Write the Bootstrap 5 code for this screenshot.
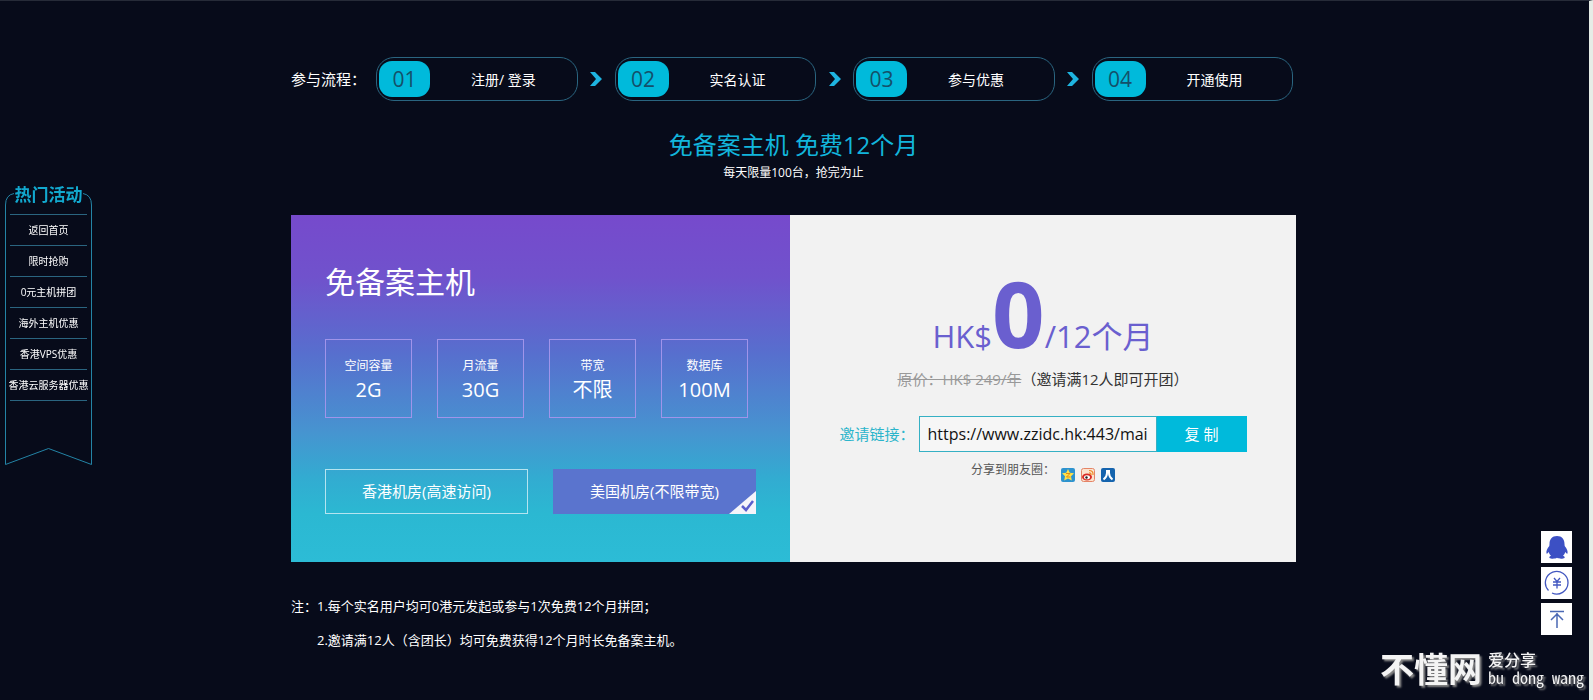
<!DOCTYPE html>
<html lang="zh-CN">
<head>
<meta charset="utf-8">
<meta name="viewport" content="width=device-width, initial-scale=1">
<title>免备案主机 免费12个月</title>
<link rel="stylesheet" href="https://cdn.jsdelivr.net/npm/bootstrap@5.3.0/dist/css/bootstrap.min.css">
<style>
  :root { --cyan: #00badb; --line: #2a6580; --violet: #6a5fcf; }
  body {
    min-height: 100vh; background: #070b1a; color: #fff; padding-right: 2px;
    border-top: 1px solid #262b38; border-right: 4px solid #e6ece6;
    font-family: "Open Sans", "Noto Sans CJK SC", sans-serif; font-size: 14px;
  }
  .page-wrap { max-width: 1005px; }
  a { color: inherit; text-decoration: none; }

  .flow { padding: 56px 3px 0 0; }
  .flow-title { flex: 0 0 85px; font-size: 15px; white-space: nowrap; }
  .flow-step { flex: 1 1 0; height: 44px; border: 1px solid var(--line); border-radius: 18px; padding-left: 2px; }
  .flow-num { width: 51px; height: 36px; border-radius: 13px; background: var(--cyan); color: #14506a; font-size: 21px; line-height: 36px; margin-right: 41px; text-align: center; }
  .flow-arrow { flex: 0 0 37px; text-align: center; line-height: 0; }

  .headline { font-size: 24px; line-height: 30px; color: #12b5dc; margin: 29px 0 0; font-weight: 400; }
  .headline-sub { font-size: 12px; line-height: 24px; margin: 1px 0 30px; }

  .offer { display: grid; grid-template-columns: 499fr 506fr; min-height: 347px; }
  .offer-spec { padding: 45px 34px 48px; background: linear-gradient(#764acc 0%, #7052cc 18%, #576fce 40%, #4793d0 62%, #32acd1 76%, #2bb8d2 86%, #2cbcd6 100%); }
  .offer-name { font-size: 30px; line-height: 44px; margin: 0 0 35px; font-weight: 400; }
  .spec-box { width: 87px; height: 79px; border: 1px solid #a094ea; padding-top: 15px; font-size: 12px; line-height: 22px; text-align: center; }
  .spec-box dt { font-weight: 400; }
  .spec-box dd { font-size: 20px; line-height: 26px; margin: 0; }
  .spec-row { gap: 25px; margin: 0 0 51px; }
  .room-row { gap: 25px; }
  .room { width: 203px; height: 45px; padding: 0; border: 1px solid #b5e4f0; background: none; color: #fff; font-size: 15px; position: relative; }
  .room.is-picked { background: #5a74ce; border-color: #5a74ce; }
  .room svg { position: absolute; right: -1px; bottom: -1px; }

  .offer-price { background: #f2f2f2; color: #333; padding-top: 52px; }
  .price { color: var(--violet); font-size: 31px; line-height: 40px; margin: 0; white-space: nowrap; }
  .price b { font-size: 92px; line-height: 92px; font-weight: 700; }
  .price-was { font-size: 15px; line-height: 24px; margin: 8px 0 25px; }
  .price-was del { color: #999; }
  .invite label { color: #2bb5cb; font-size: 15px; width: 79px; }
  .invite input { width: 238px; height: 36px; border: 1px solid #35b0c4; border-radius: 0; background: #f6f6f6; color: #111; font-size: 16px; padding: 0 8px; }
  .invite button { width: 90px; height: 36px; border: 0; background: var(--cyan); color: #fff; font-size: 15px; }
  .share { font-size: 12px; line-height: 18px; color: #555; margin-top: 9px; gap: 6px; }
  .share a { height: 21px; padding-top: 7px; line-height: 0; }

  .notes { margin: 27px 0 0; font-size: 13px; line-height: 34px; }
  .notes ol { padding: 0; margin: 0; list-style: none; }

  .side-menu { position: fixed; left: 5px; top: 186px; width: 87px; height: 280px; font-size: 10px; text-align: center; }
  .side-menu > svg { position: absolute; left: 0; top: 0; }
  .side-menu h2 { font-size: 17px; line-height: 17px; font-weight: 700; color: #12a9cf; margin: 0 0 11px; position: relative; }
  .side-menu ul { margin: 0 5px; padding: 0; list-style: none; position: relative; border-top: 1px solid var(--line); }
  .side-menu li { height: 31px; border-bottom: 1px solid var(--line); }
  .side-menu a { display: flex; justify-content: center; line-height: 30px; white-space: nowrap; }

  .tools { position: fixed; right: 21px; bottom: 65px; gap: 4px; }
  .tools a { width: 31px; height: 32px; background: #fff; display: flex; align-items: center; justify-content: center; }

  .site-mark { position: fixed; right: 9px; bottom: 10px; gap: 6px; color: #f4f4f4; text-shadow: 2px 2px 2px #888; font-family: "Noto Sans CJK SC", sans-serif; }
  .site-mark strong { font-size: 34px; line-height: 44px; }
  .site-mark span { font-size: 16px; line-height: 18px; font-weight: 500; white-space: pre; }
  .site-mark .site-latin { font-family: "Noto Sans Mono CJK SC", "Liberation Sans Narrow", "Liberation Sans", sans-serif; font-size: 16px; }
</style>
</head>
<body>
<nav class="side-menu" aria-label="热门活动">
  <svg width="87" height="280" fill="none" stroke="#2484a6"><path d="M9 7.5Q.5 9 .5 19V278.500L43.500 262.500L86.500 278.500V19Q86.500 9 78 7.500"/></svg>
  <h2>热门活动</h2>
  <ul>
    <li><a href="#">返回首页</a></li>
    <li><a href="#">限时抢购</a></li>
    <li><a href="#">0元主机拼团</a></li>
    <li><a href="#">海外主机优惠</a></li>
    <li><a href="#">香港VPS优惠</a></li>
    <li><a href="#">香港云服务器优惠</a></li>
  </ul>
</nav>

<main class="page-wrap mx-auto">
  <div class="flow d-flex align-items-center">
    <div class="flow-title">参与流程：</div>
    <div class="flow-step d-flex align-items-center"><span class="flow-num">01</span>注册/ 登录</div>
    <div class="flow-arrow"><svg width="14" height="16" fill="#1eb4e0"><path d="M1 1H6L13 8L6 15H1L7 8Z"/></svg></div>
    <div class="flow-step d-flex align-items-center"><span class="flow-num">02</span>实名认证</div>
    <div class="flow-arrow"><svg width="14" height="16" fill="#1eb4e0"><path d="M1 1H6L13 8L6 15H1L7 8Z"/></svg></div>
    <div class="flow-step d-flex align-items-center"><span class="flow-num">03</span>参与优惠</div>
    <div class="flow-arrow"><svg width="14" height="16" fill="#1eb4e0"><path d="M1 1H6L13 8L6 15H1L7 8Z"/></svg></div>
    <div class="flow-step d-flex align-items-center"><span class="flow-num">04</span>开通使用</div>
  </div>

  <h1 class="headline text-center">免备案主机 免费12个月</h1>
  <p class="headline-sub text-center">每天限量100台，抢完为止</p>

  <section class="offer">
    <div class="offer-spec">
      <h2 class="offer-name">免备案主机</h2>
      <div class="spec-row d-flex">
        <dl class="spec-box mb-0"><dt>空间容量</dt><dd>2G</dd></dl>
        <dl class="spec-box mb-0"><dt>月流量</dt><dd>30G</dd></dl>
        <dl class="spec-box mb-0"><dt>带宽</dt><dd>不限</dd></dl>
        <dl class="spec-box mb-0"><dt>数据库</dt><dd>100M</dd></dl>
      </div>
      <div class="room-row d-flex">
        <button type="button" class="room">香港机房(高速访问)</button>
        <button type="button" class="room is-picked" aria-pressed="true">美国机房(不限带宽)
          <svg width="27" height="23"><path d="M27 0V23H0Z" fill="#f4f4fa"/><path d="M13 15L17 19L24 10" fill="none" stroke="#5a5fcc" stroke-width="2.500"/></svg>
        </button>
      </div>
    </div>
    <div class="offer-price text-center">
      <p class="price">HK$<b>0</b>/12个月</p>
      <p class="price-was"><del>原价：HK$ 249/年</del>（邀请满12人即可开团）</p>
      <div class="invite d-flex align-items-center justify-content-center">
        <label for="link" class="text-start text-nowrap">邀请链接：</label>
        <input id="link" type="text" value="https://www.zzidc.hk:443/main/activity">
        <button type="button">复 制</button>
      </div>
      <div class="share d-flex justify-content-center">
        <span>分享到朋友圈：</span>
        <a href="#" aria-label="QQ空间"><svg width="14" height="14"><rect width="14" height="14" rx="2" fill="#2d93cf"/><path d="M7 1L8.800 4.800L13 5.300L10 8.300L10.800 12.500L7 10.500L3.200 12.500L4 8.300L1 5.300L5.200 4.800Z" fill="#ffe14a"/><path d="M5 5.500H9L5.500 9H9.500" fill="none" stroke="#e58a12"/></svg></a>
        <a href="#" aria-label="新浪微博"><svg width="14" height="14"><rect x=".5" y=".5" width="13" height="13" rx="2" fill="#fbe3cf" stroke="#e58466"/><ellipse cx="6" cy="9" rx="5" ry="3.500" fill="#d82b25"/><ellipse cx="6" cy="9.300" rx="3" ry="2" fill="#fff"/><circle cx="5.500" cy="9.500" r="1.200" fill="#222"/><path d="M8 2.500Q12.500 2.500 12 7M8 4.800Q10.300 4.800 10 7" fill="none" stroke="#ee8a25" stroke-width="1.200"/></svg></a>
        <a href="#" aria-label="人人网"><svg width="14" height="14"><rect width="14" height="14" rx="2" fill="#1564ae"/><path d="M6 2V5Q6 9 2.500 11.500M8 2V5Q8 9 11.500 11.500" fill="none" stroke="#fff" stroke-width="2"/></svg></a>
      </div>
    </div>
  </section>

  <section class="notes d-flex">
    <div>注：</div>
    <ol>
      <li>1.每个实名用户均可0港元发起或参与1次免费12个月拼团；</li>
      <li>2.邀请满12人（含团长）均可免费获得12个月时长免备案主机。</li>
    </ol>
  </section>
</main>

<aside class="tools d-flex flex-column">
  <a href="#" aria-label="QQ客服"><svg width="24" height="26" fill="#3c50c4"><path d="M12 2C7 2 4.500 5.500 4.500 10L4.300 12C2 14.500 1 17.500 1.500 19.500C2.200 20 3 19 3.800 18C4.200 19.700 5 20.800 6 21.800C4.500 22.300 4 23 4.500 24C6 25 10 25 12 23.800C14 25 18 25 19.500 24C20 23 19.500 22.300 18 21.800C19 20.800 19.800 19.700 20.200 18C21 19 21.800 20 22.500 19.500C23 17.500 22 14.500 19.700 12L19.500 10C19.500 5.500 17 2 12 2Z"/></svg></a>
  <a href="#" aria-label="优惠"><svg width="26" height="26" fill="none" stroke="#4257c0"><path d="M4.500 20.500A11.300 11.300 0 1 1 8 23" stroke-width="1.300"/><path d="M10 8L13 11.500L16 8M13 12V18.500M9 12H17M9 15H17" stroke-width="1.300"/></svg></a>
  <a href="#" aria-label="返回顶部"><svg width="20" height="22" fill="none" stroke="#4a68b4" stroke-width="1.500"><path d="M3 3.500H17M10 5V20M4 12L10 6L16 12"/></svg></a>
</aside>

<div class="site-mark d-flex align-items-center">
  <strong>不懂网</strong>
  <div class="d-flex flex-column"><span>爱分享</span><span class="site-latin">bu dong wang</span></div>
</div>
<script src="https://cdn.jsdelivr.net/npm/bootstrap@5.3.0/dist/js/bootstrap.bundle.min.js"></script>
</body>
</html>
